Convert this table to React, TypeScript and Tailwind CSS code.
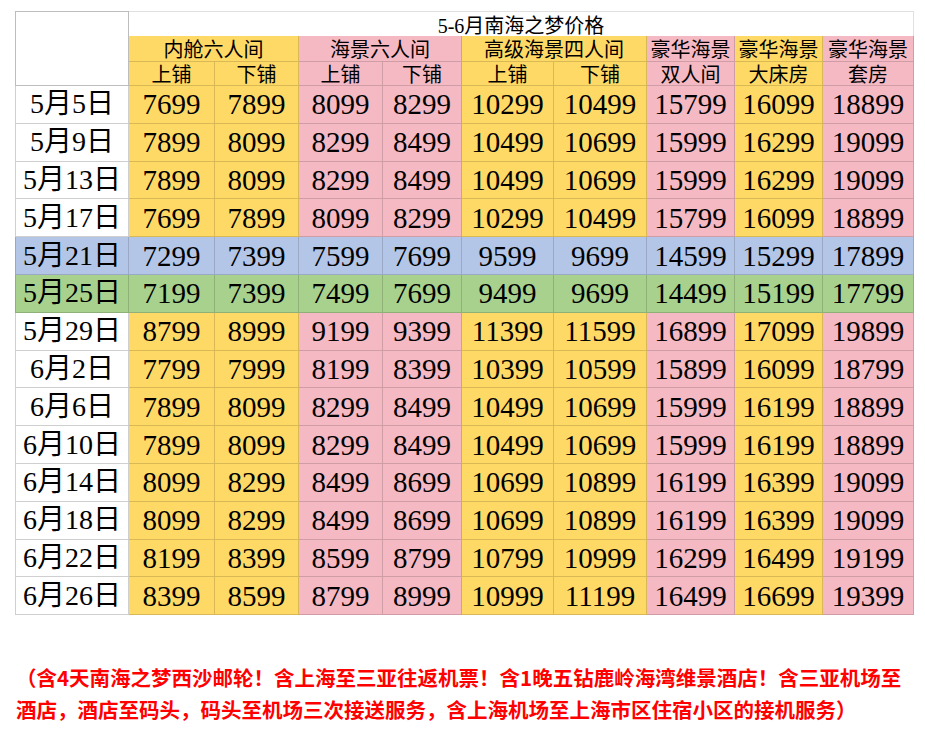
import React from "react";

const Y = "bg-[#FFD966]";
const P = "bg-[#F4B9C2]";
const B = "bg-[#B4C6E7]";
const G = "bg-[#A9D18E]";

const colColors = [Y, Y, P, P, Y, Y, P, Y, P];

const rows: [string, number[], string?][] = [
  ["5月5日", [7699, 7899, 8099, 8299, 10299, 10499, 15799, 16099, 18899]],
  ["5月9日", [7899, 8099, 8299, 8499, 10499, 10699, 15999, 16299, 19099]],
  ["5月13日", [7899, 8099, 8299, 8499, 10499, 10699, 15999, 16299, 19099]],
  ["5月17日", [7699, 7899, 8099, 8299, 10299, 10499, 15799, 16099, 18899]],
  ["5月21日", [7299, 7399, 7599, 7699, 9599, 9699, 14599, 15299, 17899], B],
  ["5月25日", [7199, 7399, 7499, 7699, 9499, 9699, 14499, 15199, 17799], G],
  ["5月29日", [8799, 8999, 9199, 9399, 11399, 11599, 16899, 17099, 19899]],
  ["6月2日", [7799, 7999, 8199, 8399, 10399, 10599, 15899, 16099, 18799]],
  ["6月6日", [7899, 8099, 8299, 8499, 10499, 10699, 15999, 16199, 18899]],
  ["6月10日", [7899, 8099, 8299, 8499, 10499, 10699, 15999, 16199, 18899]],
  ["6月14日", [8099, 8299, 8499, 8699, 10699, 10899, 16199, 16399, 19099]],
  ["6月18日", [8099, 8299, 8499, 8699, 10699, 10899, 16199, 16399, 19099]],
  ["6月22日", [8199, 8399, 8599, 8799, 10799, 10999, 16299, 16499, 19199]],
  ["6月26日", [8399, 8599, 8799, 8999, 10999, 11199, 16499, 16699, 19399]],
];

const serif = "font-['Liberation_Serif','Noto_Sans_CJK_SC',serif]";

export default function App() {
  return (
    <div className="bg-white w-[925px] h-[734px] pt-[11px] pl-[15px]">
      <div
        className={`grid grid-cols-[114px_86px_84px_84px_79px_92px_93px_88px_88px_91px] grid-rows-[25px_26px_24px_repeat(14,37.8px)] w-[899px] text-black ${serif}`}
      >
        {/* date header */}
        <div className="row-span-3 bg-white border-l border-t border-r border-b border-[#bdbdbd]" />
        {/* title */}
        <div className="col-span-9 bg-white border-t border-r border-[#e0e0e0] flex items-center justify-center pt-[3px] text-[20px] leading-none">
          5-6月南海之梦价格
        </div>
        {/* group headers */}
        <div className={`col-span-2 ${Y} border-r border-b border-black/15 flex items-center justify-center pt-[3px] text-[20px] leading-none`}>内舱六人间</div>
        <div className={`col-span-2 ${P} border-r border-b border-black/15 flex items-center justify-center pt-[3px] text-[20px] leading-none`}>海景六人间</div>
        <div className={`col-span-2 ${Y} border-r border-b border-black/15 flex items-center justify-center pt-[3px] text-[20px] leading-none`}>高级海景四人间</div>
        <div className={`${P} border-r border-b border-black/15 flex items-center justify-center pt-[3px] text-[20px] leading-none`}>豪华海景</div>
        <div className={`${Y} border-r border-b border-black/15 flex items-center justify-center pt-[3px] text-[20px] leading-none`}>豪华海景</div>
        <div className={`${P} border-r border-b border-black/15 flex items-center justify-center pt-[3px] text-[20px] leading-none`}>豪华海景</div>
        {/* sub headers */}
        {["上铺", "下铺", "上铺", "下铺", "上铺", "下铺", "双人间", "大床房", "套房"].map((t, i) => (
          <div
            key={i}
            className={`${colColors[i]} border-r border-b border-black/15 flex items-center justify-center pt-[2px] text-[20px] leading-none`}
          >
            {t}
          </div>
        ))}
        {/* data */}
        {rows.map(([date, vals, rowColor]) => (
          <React.Fragment key={date}>
            <div
              className={`${rowColor ?? "bg-white"} border-l border-r border-b ${rowColor ? "border-black/15" : "border-[#cfcfcf]"} flex items-center justify-center text-[28px] leading-none`}
            >
              {date}
            </div>
            {vals.map((v, i) => (
              <div
                key={i}
                className={`${rowColor ?? colColors[i]} border-r border-b border-black/15 flex items-center justify-center text-[29px] leading-none pt-[1px]`}
              >
                {v}
              </div>
            ))}
          </React.Fragment>
        ))}
      </div>
      <p className="mt-[46px] ml-px w-[892px] text-[20.5px] leading-[32px] font-bold text-[#FF0000] font-['Noto_Sans_CJK_SC',sans-serif]">
        （含4天南海之梦西沙邮轮！含上海至三亚往返机票！含1晚五钻鹿岭海湾维景酒店！含三亚机场至酒店，酒店至码头，码头至机场三次接送服务，含上海机场至上海市区住宿小区的接机服务）
      </p>
    </div>
  );
}
